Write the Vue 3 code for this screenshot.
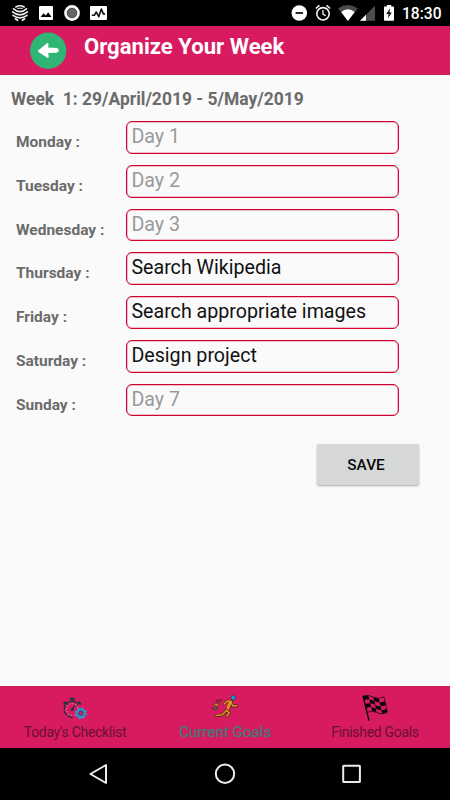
<script setup>
import { reactive } from 'vue'

const days = reactive([
  { name: 'Monday', goal: '', hint: 'Day 1' },
  { name: 'Tuesday', goal: '', hint: 'Day 2' },
  { name: 'Wednesday', goal: '', hint: 'Day 3' },
  { name: 'Thursday', goal: 'Search Wikipedia', hint: 'Day 4' },
  { name: 'Friday', goal: 'Search appropriate images', hint: 'Day 5' },
  { name: 'Saturday', goal: 'Design project', hint: 'Day 6' },
  { name: 'Sunday', goal: '', hint: 'Day 7' },
])
</script>

<template>
  <div class="screen">
    <div class="status">
      <svg class="status-left" width="110" height="26" viewBox="0 0 110 26" fill="none">
        <g stroke="#ececec" stroke-width="1.7" stroke-linecap="round">
          <path d="M15.8 6.9Q20 4.6 24.2 6.9" />
          <path d="M13.5 8.8Q20 14.6 26.5 8.8" />
          <path d="M12.6 11.8Q20 18 27.4 11.8" />
          <path d="M13 15.4Q20 20.4 27 15.4" />
          <path d="M15.4 18.8L17.6 20.3M24.6 18.8L22.4 20.3" />
          <path d="M17.4 8.2H22.6" stroke-width="1.1" />
        </g>
        <rect x="39" y="6" width="14" height="14" rx="1" fill="#fff" />
        <path d="M40.6 17L43.6 13.2L45.7 15.6L48.2 12.2L51.5 17Z" fill="#000" />
        <circle cx="72" cy="13" r="7.9" fill="#fff" />
        <circle cx="72" cy="13" r="4.8" fill="#666" stroke="#444" stroke-width="1" />
        <rect x="90" y="6" width="17" height="14" rx="1" fill="#fff" />
        <path d="M91.8 15.2H94.5L96.3 12L98.7 16.7L101.4 9L103.3 13.9H105" stroke="#111" stroke-width="1.6" stroke-linejoin="round" />
      </svg>
      <svg class="status-right" width="115" height="26" viewBox="285 0 115 26" fill="none">
        <circle cx="299.3" cy="13" r="7.8" fill="#fff" />
        <path d="M295.6 13H303" stroke="#111" stroke-width="1.8" />
        <circle cx="323" cy="13.8" r="6.2" stroke="#f4f4f4" stroke-width="1.6" />
        <path d="M315.8 8.5L319.5 5.4M330.2 8.5L326.5 5.4" stroke="#f4f4f4" stroke-width="1.6" />
        <path d="M322.9 10V14.1L325.7 15.8" stroke="#f4f4f4" stroke-width="1.3" />
        <path d="M338 8.5Q347.8 1.6 357.8 8.5L347.9 21Z" fill="#4a4a4a" />
        <path d="M341.2 12Q347.8 6.6 354.7 12L347.9 21Z" fill="#fff" />
        <path d="M360 20.8L375 5.8V20.8Z" fill="#4c4c4c" />
        <path d="M360 20.8L366 14.8V20.8Z" fill="#fff" />
        <path d="M384 7.4Q384 6.6 384.8 6.6H386.8V5H391.2V6.6H393.2Q394 6.6 394 7.4V20Q394 20.8 393.2 20.8H384.8Q384 20.8 384 20Z" fill="#fff" />
        <path d="M390.1 8.3L386.2 14.1H388.6L387.9 18.3L391.9 12.4H389.5Z" fill="#111" />
      </svg>
      <span class="clock">18:30</span>
    </div>

    <header class="header">
      <button class="back" aria-label="Back">
        <svg width="37" height="38" viewBox="0 0 37 38">
          <circle cx="18.2" cy="18.7" r="18.2" fill="#2fb574" />
          <path d="M8.4 18.2L17 11.2Q18.7 10.3 18.5 12.5L18.2 15.4L26.7 16Q28.7 16.3 28.7 18.3Q28.7 20.5 26.5 20.7L18.2 21L18.7 24.2Q18.8 26.6 16.9 25.5L8.4 19.9Q7.4 19 8.4 18.2Z" fill="#fff" />
        </svg>
      </button>
      <h1>Organize Your Week</h1>
    </header>

    <main class="content">
      <h2>Week&nbsp; 1: 29/April/2019 - 5/May/2019</h2>
      <div class="rows">
        <label v-for="day in days" :key="day.name" class="row">
          <span class="day">{{ day.name }} :</span>
          <input v-model="day.goal" type="text" :placeholder="day.hint" />
        </label>
      </div>
      <button class="save">SAVE</button>
    </main>

    <nav class="tabs">
      <a class="tab today">
        <svg width="26" height="26" viewBox="0 0 26 26" fill="none">
          <path d="M4.3 9.2A8.1 8.1 0 0 0 12.4 21.3M5.4 7.8A8 8 0 0 1 17 7.8" stroke="#202d39" stroke-width="1.3" stroke-dasharray="5 1" />
          <path d="M8.5 2.8H13.8M11.2 3V6M2.7 8.2L5.2 5.8M19.7 8.2L17.2 5.8" stroke="#173d3d" stroke-width="2" />
          <path d="M3.8 6.8L6.5 8.8M18.6 6.8L16 8.8" stroke="#173d3d" stroke-width="1.3" />
          <circle cx="11.2" cy="13.4" r="5.8" stroke="#8fa7d2" stroke-width="1.1" stroke-dasharray="1 2" />
          <path d="M11 14L13.7 9.6" stroke="#26303e" stroke-width="1.3" />
          <circle cx="11.3" cy="13.6" r="1.5" fill="#26303e" />
          <circle cx="19.9" cy="17.2" r="5" stroke="#2c9bd0" stroke-width="2" stroke-dasharray="2 1.93" />
          <circle cx="19.9" cy="17.2" r="3.5" stroke="#2c9bd0" stroke-width="2.2" />
          <circle cx="19.9" cy="17.2" r="2.3" stroke="#29406e" stroke-width=".9" />
        </svg>
        <span>Today's Checklist</span>
      </a>
      <a class="tab current">
        <svg width="28" height="26" viewBox="0 0 28 26" fill="none" stroke-linecap="round" stroke-linejoin="round">
          <g stroke="#3a2616" stroke-width="2.8">
            <path d="M13.1 8.9L16.5 6.1L20.2 6.2L18 13L14.3 16.6L11.5 19.8L5.2 20.6M15.5 15.8L18.5 17.6L15.9 21.2M20.2 6.8L21.5 10.8H26" />
          </g>
          <path d="M13.1 8.9L16.5 6.1L20.2 6.2L18 13L14.3 16.6L11.5 19.8L5.2 20.6M15.5 15.8L18.5 17.6L15.9 21.2M20.2 6.8L21.5 10.8H26" stroke="#e59224" stroke-width="1.5" />
          <path d="M18.8 7L16.8 12.4" stroke="#e59224" stroke-width="2" />
          <circle cx="22.3" cy="2.6" r="2.2" fill="#1b9bd8" stroke="#244763" stroke-width=".8" />
          <path d="M5.5 5.5L10.7 4.3L9 6.8L5.4 7Z" fill="#ba2828" stroke="#402326" stroke-width=".7" />
          <path d="M2.8 9.1L8.1 8.6L6.5 11L3.8 10.7Z" fill="#edb824" stroke="#40301b" stroke-width=".7" />
          <path d="M1.1 13.4L5 12.6L6.9 13.1L4.7 14.4Z" fill="#369556" stroke="#2b3826" stroke-width=".7" />
        </svg>
        <span>Current Goals</span>
      </a>
      <a class="tab finished">
        <svg width="28" height="28" viewBox="0 0 28 28" fill="#080608">
          <path d="M1.4 2.1L2.5 1.7L8.6 26.3L7.4 27Z" />
          <path d="M2 2Q7 .2 12 3Q17 5.6 23 2.9L26.3 18.1Q20.6 21.4 15 18.2Q10 16.2 6 18.5Z" fill="none" stroke="#080608" stroke-width=".7" />
          <path d="M2.2 2.1Q4.8 1.1 7.4 1.5L8.3 5.3Q5.6 5 3.2 6.1ZM12.3 3.2Q15.2 4.6 17.8 4.5L18.7 8.4Q15.8 8.4 13.2 7ZM8.3 5.3Q11 5.7 13.2 7L14.1 11Q11.8 9.6 9.2 9.3ZM18.7 8.4Q21.5 8.3 24 7.1L24.8 11Q22.4 12.2 19.6 12.3ZM4.1 10.2Q6.7 9.1 9.2 9.3L10.1 13.1Q7.4 13.1 5.1 14.2ZM14.1 11Q16.8 12.4 19.6 12.3L20.5 16.2Q17.5 16.3 14.8 14.8ZM10.1 13.1Q12.5 13.6 14.8 14.8L15.5 18.3Q13.3 17.1 11 16.7ZM20.5 16.2Q23.2 16 25.6 14.8L26.3 18.1Q23.8 19.7 21.2 19.7Z" />
        </svg>
        <span>Finished Goals</span>
      </a>
    </nav>

    <div class="system-nav">
      <svg width="450" height="52" viewBox="0 0 450 52" fill="none" stroke="#ececec" stroke-width="2" stroke-linejoin="round">
        <path d="M90.4 26L106 17V35Z" />
        <circle cx="225" cy="25.8" r="9.2" />
        <rect x="343.2" y="17.7" width="16.7" height="16.2" rx=".5" />
      </svg>
    </div>
  </div>
</template>

<style>
body { margin: 0; background: #fafafa; }
</style>

<style scoped>
* { box-sizing: border-box; }
.screen { width: 450px; height: 800px; display: flex; flex-direction: column; font-family: Roboto, sans-serif; background: #fafafa; overflow: hidden; }
svg { display: block; flex: none; }
button { border: 0; padding: 0; font-family: inherit; }
.status { height: 26px; flex: none; display: flex; background: #000; }
.status-right { margin-left: 175px; }
.clock { margin-left: 2px; color: #fff; font-size: 15.6px; font-weight: 500; line-height: 28px; white-space: nowrap; }
.header { height: 49px; flex: none; display: flex; background: #d81b60; border-bottom: 1px solid #c92058; }
.back { width: 37px; height: 38px; margin: 6px 0 0 30px; background: transparent; }
h1 { margin: 6px 0 0 17px; color: #fff; font-size: 22.1px; line-height: 28px; font-weight: 700; white-space: nowrap; }
.content { flex: 1; min-height: 0; display: flex; flex-direction: column; }
h2 { margin: 13px 0 0 11px; font-size: 17.45px; line-height: 22px; font-weight: 700; color: #6b6b6b; white-space: nowrap; }
.rows { display: flex; flex-direction: column; gap: 11px; margin: 11px 0 0 16px; }
.row { display: flex; height: 32.75px; }
.day { width: 110px; flex: none; padding-top: 11px; color: #6b6b6b; font-size: 15.5px; line-height: 20px; font-weight: 700; white-space: nowrap; }
input { width: 273px; height: 32.75px; margin: 0; padding: 0 4px 1.4px 4.4px; border: 1px solid #d50032; border-radius: 6px; box-shadow: inset 0 0 0 .5px #e5809a; outline: 0; color: #111; background: #fafafa; font-family: inherit; font-size: 19.65px; line-height: 24px; }
input::placeholder { color: #999; opacity: 1; }
.save { width: 102px; height: 41px; margin: 28px 0 0 317px; padding-right: 4px; background: #d6d7d7; border-radius: 2px; box-shadow: 0 1px 2px rgba(0,0,0,.32); color: #090909; font-size: 15.4px; font-weight: 500; }
.tabs { height: 62px; flex: none; display: grid; grid-template-columns: repeat(3, 150px); background: #d81b60; border-top: 1px solid #c41c55; }
.tab { display: flex; flex-direction: column; align-items: center; padding-top: 8px; color: #681032; font-size: 14px; letter-spacing: -.31px; white-space: nowrap; }
.tab span { line-height: 20px; }
.today svg { margin: 1px 2px 0 0; }
.current { color: #457d7a; font-size: 15.3px; letter-spacing: -.08px; }
.current span { text-shadow: 0 0 1px rgba(20, 125, 120, .5); }
.current svg { margin-bottom: 1px; }
.finished svg { margin: -1px 0 0; }
.system-nav { height: 52px; flex: none; background: #000; }
</style>
